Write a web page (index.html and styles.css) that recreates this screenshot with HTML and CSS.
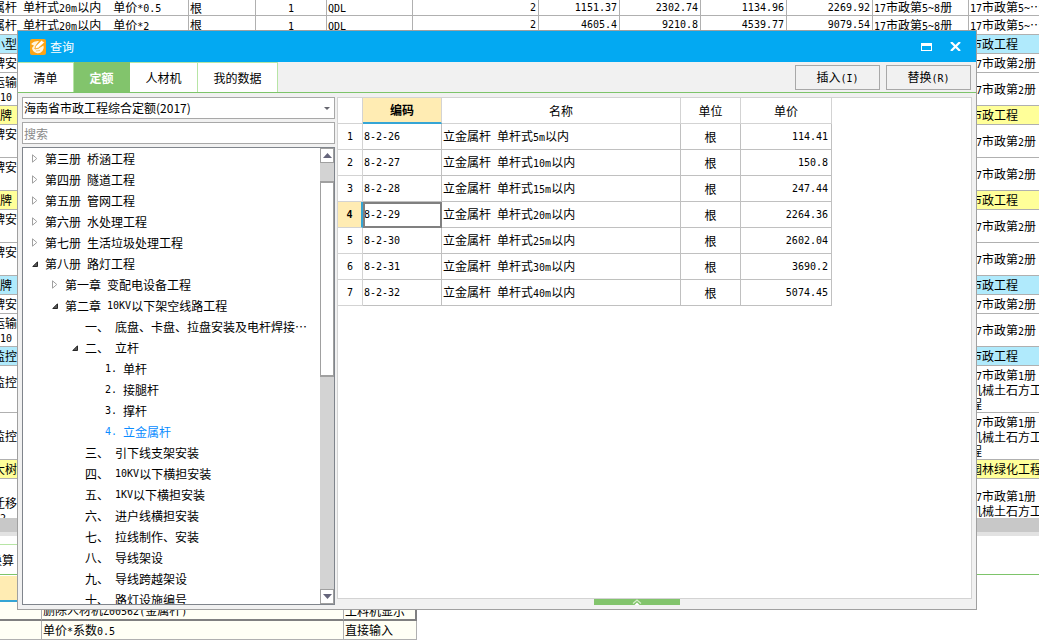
FILE: index.html
```html
<!DOCTYPE html>
<html lang="zh-CN">
<head>
<meta charset="utf-8">
<title>查询</title>
<link rel="stylesheet" href="styles.css">
</head>
<body>
<div class="app">
  <div class="sheet-view">
    <table class="sheet">
      <colgroup>
        <col class="s-name"><col class="s-unit"><col class="s-qty"><col class="s-code"><col class="s-formula"><col class="s-price"><col class="s-price"><col class="s-price2"><col class="s-price2"><col class="s-lib"><col>
      </colgroup>
      <tbody>
        <tr class="cut"><td class="name">属杆<span class="n"> </span>单杆式<span class="n">20m</span>以内<span class="n">  </span>单价<span class="n">*0.5</span></td><td class="txt">根</td><td class="mid"><span class="n">1</span></td><td class="txt"><span class="n">QDL</span></td><td class="num">2</td><td class="num">1151.37</td><td class="num">2302.74</td><td class="num">1134.96</td><td class="num">2269.92</td><td class="txt"><span class="n">17</span>市政第<span class="n">5~8</span>册</td><td class="txt"><span class="n">17</span>市政第<span class="n">5~</span>…</td></tr>
        <tr><td class="name">属杆<span class="n"> </span>单杆式<span class="n">20m</span>以内<span class="n">  </span>单价<span class="n">*2</span></td><td class="txt">根</td><td class="mid"><span class="n">1</span></td><td class="txt"><span class="n">QDL</span></td><td class="num">2</td><td class="num">4605.4</td><td class="num">9210.8</td><td class="num">4539.77</td><td class="num">9079.54</td><td class="txt"><span class="n">17</span>市政第<span class="n">5~8</span>册</td><td class="txt"><span class="n">17</span>市政第<span class="n">5~</span>…</td></tr>
        <tr class="blue"><td class="name">小型</td><td colspan="9"></td><td class="txt">市政工程</td></tr>
        <tr><td class="name">牌安</td><td colspan="9"></td><td class="txt"><span class="n">17</span>市政第<span class="n">2</span>册</td></tr>
        <tr class="two"><td class="name">运输<br><span class="n">10</span></td><td colspan="9"></td><td class="txt"><span class="n">17</span>市政第<span class="n">2</span>册</td></tr>
        <tr class="yellow"><td>牌</td><td colspan="9"></td><td class="txt">市政工程</td></tr>
        <tr class="two"><td class="name">牌安<br>&nbsp;</td><td colspan="9"></td><td class="txt"><span class="n">17</span>市政第<span class="n">2</span>册</td></tr>
        <tr class="two"><td class="name">牌安<br>&nbsp;</td><td colspan="9"></td><td class="txt"><span class="n">17</span>市政第<span class="n">2</span>册</td></tr>
        <tr class="yellow"><td>牌</td><td colspan="9"></td><td class="txt">市政工程</td></tr>
        <tr class="two"><td class="name">牌安<br>&nbsp;</td><td colspan="9"></td><td class="txt"><span class="n">17</span>市政第<span class="n">2</span>册</td></tr>
        <tr class="two"><td class="name">牌安<br>&nbsp;</td><td colspan="9"></td><td class="txt"><span class="n">17</span>市政第<span class="n">2</span>册</td></tr>
        <tr class="blue"><td>牌</td><td colspan="9"></td><td class="txt">市政工程</td></tr>
        <tr><td class="name">牌安</td><td colspan="9"></td><td class="txt"><span class="n">17</span>市政第<span class="n">2</span>册</td></tr>
        <tr class="two"><td class="name">运输<br><span class="n">10</span></td><td colspan="9"></td><td class="txt"><span class="n">17</span>市政第<span class="n">2</span>册</td></tr>
        <tr class="blue"><td class="name">监控</td><td colspan="9"></td><td class="txt">市政工程</td></tr>
        <tr class="three"><td class="name">监控<br>&nbsp;</td><td colspan="9"></td><td class="txt"><span class="n">17</span>市政第<span class="n">1</span>册<br>机械土石方工<br>程</td></tr>
        <tr class="three"><td class="name">监控</td><td colspan="9"></td><td class="txt"><span class="n">17</span>市政第<span class="n">1</span>册<br>机械土石方工<br>程</td></tr>
        <tr class="yellow"><td class="name">大树</td><td colspan="9"></td><td class="txt">园林绿化工程</td></tr>
        <tr class="four"><td class="name">迁移<br><span class="n">2</span></td><td colspan="9"></td><td class="txt"><span class="n">17</span>市政第<span class="n">1</span>册<br>机械土石方工<br>程</td></tr>
      </tbody>
    </table>
  </div>
  <div class="detail">
    <div class="hscroll"></div>
    <div class="detail-tabs"><button type="button" class="detail-tab">换算</button></div>
    <table class="convert">
      <colgroup><col class="c-no"><col class="c-item"><col class="c-kind"></colgroup>
      <thead><tr><th></th><th></th><th></th></tr></thead>
      <tbody>
        <tr class="current"><td></td><td>删除人材机<span class="n">Z00562(</span>金属杆<span class="n">)</span></td><td>工料机显示</td></tr>
        <tr><td></td><td>单价<span class="n">*</span>系数<span class="n">0.5</span></td><td>直接输入</td></tr>
      </tbody>
    </table>
  </div>
</div>

<section class="dialog" role="dialog" aria-labelledby="dlg-title">
  <header class="titlebar">
    <svg class="logo" width="16" height="16" viewBox="0 0 16 16">
      <rect width="16" height="16" rx="2" fill="#fba416"/>
      <path d="M1.500 4.500 Q4 1.500 9 2 L6 6 L4.500 10 L8.500 9.500 L13.500 6.500 Q14.500 9.500 12.500 12 Q10 14.800 6.500 14 Q2.500 13 2 9 L4 6.500 L1.500 5.500 Z" fill="#fff4dc"/>
      <path d="M5.500 7.200 L11.500 1.200 L14.500 3.500 L8.500 9 L5 10 Z" fill="#fff" stroke="#fba416" stroke-width=".8"/>
      <path d="M6 12 L10 11.500" stroke="#fbc66c" fill="none"/>
    </svg>
    <h1 id="dlg-title">查询</h1>
    <div class="win-actions">
      <button type="button" aria-label="最大化"><svg width="11" height="8" viewBox="0 0 11 8"><path d="M0 0H11V8H0Z M1 3V7H10V3Z" fill="#fff" fill-rule="evenodd"/></svg></button>
      <button type="button" aria-label="关闭"><svg width="11" height="9" viewBox="0 0 11 9"><path d="M1 0 L10 9 M10 0 L1 9" stroke="#fff" stroke-width="2.2" fill="none"/></svg></button>
    </div>
  </header>
  <div class="toolbar">
    <nav class="tabs" role="tablist">
      <button type="button" role="tab" class="t2">清单</button>
      <button type="button" role="tab" class="t2 active" aria-selected="true">定额</button>
      <button type="button" role="tab" class="t3">人材机</button>
      <button type="button" role="tab" class="t4">我的数据</button>
    </nav>
    <div class="actions">
      <button type="button">插入<span class="n">(I)</span></button>
      <button type="button">替换<span class="n">(R)</span></button>
    </div>
  </div>
  <div class="content">
    <aside class="side">
      <div class="combo">
        <select aria-label="定额库"><option>海南省市政工程综合定额(2017)</option></select>
        <svg width="6" height="3" viewBox="0 0 6 3"><path d="M0 0H6L3 3Z" fill="#65656e"/></svg>
      </div>
      <input class="search" type="text" placeholder="搜索" aria-label="搜索">
      <div class="tree-box">
        <ul class="tree">
          <li class="l1"><button type="button" aria-label="展开"><svg width="6" height="9" viewBox="0 0 6 9"><path d="M.5 .8V8.200L4.800 4.500Z" fill="#fff" stroke="#a0a0a0"/></svg></button>第三册<span class="n"> </span>桥涵工程</li>
          <li class="l1"><button type="button" aria-label="展开"><svg width="6" height="9" viewBox="0 0 6 9"><path d="M.5 .8V8.200L4.800 4.500Z" fill="#fff" stroke="#a0a0a0"/></svg></button>第四册<span class="n"> </span>隧道工程</li>
          <li class="l1"><button type="button" aria-label="展开"><svg width="6" height="9" viewBox="0 0 6 9"><path d="M.5 .8V8.200L4.800 4.500Z" fill="#fff" stroke="#a0a0a0"/></svg></button>第五册<span class="n"> </span>管网工程</li>
          <li class="l1"><button type="button" aria-label="展开"><svg width="6" height="9" viewBox="0 0 6 9"><path d="M.5 .8V8.200L4.800 4.500Z" fill="#fff" stroke="#a0a0a0"/></svg></button>第六册<span class="n"> </span>水处理工程</li>
          <li class="l1"><button type="button" aria-label="展开"><svg width="6" height="9" viewBox="0 0 6 9"><path d="M.5 .8V8.200L4.800 4.500Z" fill="#fff" stroke="#a0a0a0"/></svg></button>第七册<span class="n"> </span>生活垃圾处理工程</li>
          <li class="l1"><button type="button" aria-label="收起"><svg width="6" height="6" viewBox="0 0 6 6"><path d="M5.500 .8V5.500H.8Z" fill="#595959" stroke="#262626"/></svg></button>第八册<span class="n"> </span>路灯工程</li>
          <li class="l2"><button type="button" aria-label="展开"><svg width="6" height="9" viewBox="0 0 6 9"><path d="M.5 .8V8.200L4.800 4.500Z" fill="#fff" stroke="#a0a0a0"/></svg></button>第一章<span class="n"> </span>变配电设备工程</li>
          <li class="l2"><button type="button" aria-label="收起"><svg width="6" height="6" viewBox="0 0 6 6"><path d="M5.500 .8V5.500H.8Z" fill="#595959" stroke="#262626"/></svg></button>第二章<span class="n"> 10KV</span>以下架空线路工程</li>
          <li class="l3 leaf">一、<span class="n"> </span>底盘、卡盘、拉盘安装及电杆焊接⋯</li>
          <li class="l3"><button type="button" aria-label="收起"><svg width="6" height="6" viewBox="0 0 6 6"><path d="M5.500 .8V5.500H.8Z" fill="#595959" stroke="#262626"/></svg></button>二、<span class="n"> </span>立杆</li>
          <li class="l4 leaf"><span class="n">1. </span>单杆</li>
          <li class="l4 leaf"><span class="n">2. </span>接腿杆</li>
          <li class="l4 leaf"><span class="n">3. </span>撑杆</li>
          <li class="l4 leaf selected"><span class="n">4. </span>立金属杆</li>
          <li class="l3 leaf">三、<span class="n"> </span>引下线支架安装</li>
          <li class="l3 leaf">四、<span class="n"> 10KV</span>以下横担安装</li>
          <li class="l3 leaf">五、<span class="n"> 1KV</span>以下横担安装</li>
          <li class="l3 leaf">六、<span class="n"> </span>进户线横担安装</li>
          <li class="l3 leaf">七、<span class="n"> </span>拉线制作、安装</li>
          <li class="l3 leaf">八、<span class="n"> </span>导线架设</li>
          <li class="l3 leaf">九、<span class="n"> </span>导线跨越架设</li>
          <li class="l3 leaf">十、<span class="n"> </span>路灯设施编号</li>
        </ul>
        <div class="vscroll">
          <button type="button" aria-label="向上"><svg width="9" height="5" viewBox="0 0 9 5"><path d="M0 5H9L4.500 0Z" fill="#65657b"/></svg></button>
          <div class="track"><div class="thumb"></div></div>
          <button type="button" aria-label="向下"><svg width="9" height="5" viewBox="0 0 9 5"><path d="M0 0H9L4.500 5Z" fill="#65657b"/></svg></button>
        </div>
      </div>
    </aside>
    <div class="main">
      <div class="result">
        <table class="quota">
          <colgroup><col class="q-no"><col class="q-code"><col class="q-name"><col class="q-unit"><col class="q-price"></colgroup>
          <thead><tr><th></th><th class="sorted">编码</th><th>名称</th><th>单位</th><th>单价</th></tr></thead>
          <tbody>
            <tr><th>1</th><td class="code">8-2-26</td><td>立金属杆<span class="n"> </span>单杆式<span class="n">5m</span>以内</td><td class="mid">根</td><td class="num">114.41</td></tr>
            <tr><th>2</th><td class="code">8-2-27</td><td>立金属杆<span class="n"> </span>单杆式<span class="n">10m</span>以内</td><td class="mid">根</td><td class="num">150.8</td></tr>
            <tr><th>3</th><td class="code">8-2-28</td><td>立金属杆<span class="n"> </span>单杆式<span class="n">15m</span>以内</td><td class="mid">根</td><td class="num">247.44</td></tr>
            <tr class="current"><th>4</th><td class="code">8-2-29</td><td>立金属杆<span class="n"> </span>单杆式<span class="n">20m</span>以内</td><td class="mid">根</td><td class="num">2264.36</td></tr>
            <tr><th>5</th><td class="code">8-2-30</td><td>立金属杆<span class="n"> </span>单杆式<span class="n">25m</span>以内</td><td class="mid">根</td><td class="num">2602.04</td></tr>
            <tr><th>6</th><td class="code">8-2-31</td><td>立金属杆<span class="n"> </span>单杆式<span class="n">30m</span>以内</td><td class="mid">根</td><td class="num">3690.2</td></tr>
            <tr><th>7</th><td class="code">8-2-32</td><td>立金属杆<span class="n"> </span>单杆式<span class="n">40m</span>以内</td><td class="mid">根</td><td class="num">5074.45</td></tr>
          </tbody>
        </table>
      </div>
      <button type="button" class="handle" aria-label="展开详情"><svg width="10" height="6" viewBox="0 0 10 6"><path d="M1 4.500 L5 1 L9 4.500" fill="none" stroke="#d4efc9" stroke-width="1.300"/><path d="M2.500 6 L5 3.600 L7.500 6Z" fill="#fff"/></svg></button>
    </div>
  </div>
</section>
</body>
</html>
```
FILE: styles.css
```css
* { box-sizing: border-box; }

body {
  margin: 0;
  height: 100vh;
  overflow: hidden;
  position: relative;
  background: #fff;
  color: #000;
  font: 12px/14px "Noto Sans CJK SC", sans-serif;
}

button, input, select { font: inherit; color: inherit; }
button { padding: 0; border: 0; background: none; }
svg { display: block; }
table { border-collapse: separate; border-spacing: 0; table-layout: fixed; }
td, th { padding: 0; font-weight: 400; white-space: nowrap; overflow: hidden; }

/* Half-width characters: each takes half of a full-width one */
.n, .num, .code, .quota tbody th {
  font-family: "DejaVu Sans Mono", monospace;
  font-size: 10px;
  white-space: pre;
}
.n { line-height: 12px; }

/* Sheet behind the dialog */
.app { display: flex; flex-direction: column; height: 100%; }
.sheet-view { flex: 1; min-height: 0; overflow: hidden; }
.sheet { width: 100%; }
.s-name { width: 189px; }
.s-unit { width: 67px; }
.s-qty { width: 71px; }
.s-code { width: 86px; }
.s-formula { width: 126px; }
.s-price { width: 81px; }
.s-price2 { width: 86px; }
.s-lib { width: 96px; }
.sheet td {
  height: 19px;
  border-right: 1px solid #b0b0b0;
  border-bottom: 1px solid #b0b0b0;
}
.sheet td:last-child { border-right: 0; }
.sheet .cut td { height: 15px; }
.sheet .two td { height: 33px; }
.sheet .three td { height: 47px; }
.sheet .four td { height: 64px; }
.sheet .name { text-indent: -7px; }
.sheet .txt { padding-left: 1px; }
.sheet .num { padding-right: 2px; }
.mid { text-align: center; }
.num { text-align: right; }
.blue td { background: #b0eafc; }
.yellow td { background: #ffff99; }

.detail { display: flex; flex-direction: column; }
.hscroll { height: 18px; background: #c8c8c8; border-bottom: 4px solid #e2e2e2; }
.detail-tabs { display: flex; height: 39px; padding-top: 8px; border-bottom: 1px solid #7dc46a; }
.detail-tab {
  width: 96px;
  border-top: 1px solid #b7e5a5;
  text-align: left;
  text-indent: -10px;
  overflow: hidden;
}
.convert { width: 417px; margin-top: 1px; }
.c-no { width: 42px; }
.c-item { width: 302px; }
.convert th { height: 26px; background: #ffecb3; border-bottom: 2px solid #35a5d5; }
.convert td {
  height: 19px;
  padding-left: 1px;
  background: #fffff5;
  border-right: 1px solid #b0b0b0;
  border-bottom: 1px solid #b0b0b0;
}
.convert .current td { border-bottom: 2px solid #808080; }
.convert .current td:last-child { border-right: 2px solid #808080; }

/* Dialog */
.dialog {
  position: absolute;
  inset: 30px 62px 30px 17px;
  display: flex;
  flex-direction: column;
  border: 1px solid #a0a0a0;
  background: #f1f1f1;
}
.titlebar {
  display: flex;
  align-items: center;
  height: 31px;
  padding: 0 14px 0 12px;
  gap: 4px;
  background: #03a9f2;
  color: #fff;
}
.titlebar h1 { margin: 0; font-size: 12px; font-weight: 400; }
.win-actions { display: flex; align-items: center; gap: 16px; margin-left: auto; }
.win-actions button { width: 13px; height: 13px; display: grid; place-items: center; }

.toolbar {
  display: flex;
  justify-content: space-between;
  height: 31px;
  border-bottom: 1px solid #7dc46a;
}
.tabs { display: flex; }
.tabs button {
  background: #fff;
  border-top: 1px solid #b7e5a5;
  border-right: 1px solid #b7e5a5;
}
.tabs .t2 { width: 56px; }
.tabs .t3 { width: 68px; }
.tabs .t4 { width: 80px; }
.tabs .active { background: #82c46c; color: #fff; font-weight: 700; border-color: #82c46c; }
.actions { display: flex; gap: 6px; padding: 3px 5px 2px 0; }
.actions button { width: 85px; background: #f1f1f1; border: 1px solid #a8a8a8; }

.content { flex: 1; display: flex; gap: 2px; min-height: 0; padding: 4px; }
.side { display: flex; flex-direction: column; gap: 3px; width: 313px; }
.combo { display: grid; align-items: center; }
.combo select, .combo svg { grid-area: 1 / 1; }
.combo svg { justify-self: end; margin-right: 5px; pointer-events: none; }
.combo select {
  appearance: none;
  width: 100%;
  height: 22px;
  margin: 0;
  padding: 0 1px;
  border: 1px solid #a8a8a8;
  border-radius: 0;
  background: #fff;
}
.search { height: 22px; padding: 0 1px; border: 1px solid #a8a8a8; background: #fff; }
.search::placeholder { color: #8a8a8a; opacity: 1; }

.tree-box {
  flex: 1;
  display: flex;
  min-height: 0;
  border: 1px solid #80858c;
  background: #fff;
}
.tree { flex: 1; margin: 0; padding: 0; list-style: none; overflow: hidden; }
.tree li { display: flex; align-items: center; height: 21px; white-space: nowrap; }
.tree button { width: 8px; margin-right: 6px; display: grid; place-items: center; flex: none; }
.l1 { padding-left: 8px; }
.l2 { padding-left: 28px; }
.l3 { padding-left: 48px; }
.l4 { padding-left: 68px; }
.leaf::before { content: ""; width: 14px; flex: none; }
.selected { color: #0a8cff; }

.vscroll { display: flex; flex-direction: column; width: 14px; background: #d3d3d3; }
.vscroll button {
  height: 15px;
  display: grid;
  place-items: center;
  border: 1px solid #a0a0a0;
  background: #fff;
}
.track { flex: 1; padding-top: 18px; }
.thumb { height: 48%; border: 1px solid #a0a0a0; border-top-width: 2px; border-bottom-width: 2px; background: #fff; }

.main { flex: 1; display: flex; flex-direction: column; min-width: 0; }
.result { flex: 1; min-height: 0; border: 1px solid #d3d3d3; background: #fff; }
.handle { width: 86px; height: 6px; margin-left: 257px; background: #82c46c; display: grid; place-items: center; }

.q-no { width: 25px; }
.q-code { width: 79px; }
.q-name { width: 239px; }
.q-unit { width: 60px; }
.q-price { width: 91px; }
.quota { width: 494px; }
.quota th, .quota td { height: 26px; border-right: 1px solid #c0c0c0; border-bottom: 1px solid #c0c0c0; }
.quota th { border-color: #d3d3d3; }
.quota td { padding-left: 1px; }
.quota .mid { padding: 0; }
.quota .num { padding-right: 3px; }
.quota .sorted { background: #ffecb3; border-bottom: 2px solid #35a5d5; font-weight: 700; }
.quota .current th { background: #ffecb3; border-right: 2px solid #35a5d5; font-weight: 700; }
.quota .current .code { outline: 2px solid #808080; outline-offset: -2px; }
```
